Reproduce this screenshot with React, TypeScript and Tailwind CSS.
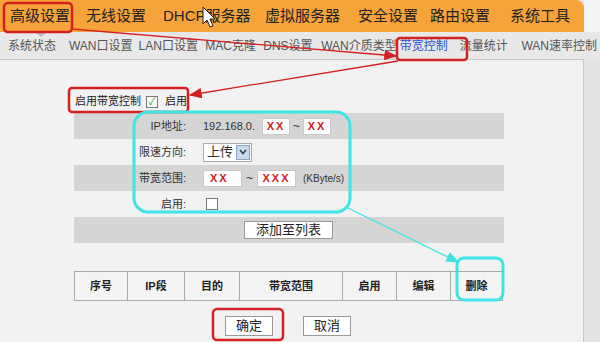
import React from "react";

const topMenu = [
  { label: "高级设置", cls: "w-[76px]" },
  { label: "无线设置", cls: "w-[77px]" },
  { label: "DHCP服务器", cls: "w-[102px]" },
  { label: "虚拟服务器", cls: "w-[93px]" },
  { label: "安全设置", cls: "w-[72px]" },
  { label: "路由设置", cls: "w-[80px]" },
  { label: "系统工具", cls: "w-[70px]" },
];

const subMenu = [
  { label: "系统状态", cls: "w-[62px]" },
  { label: "WAN口设置", cls: "w-[71px]" },
  { label: "LAN口设置", cls: "w-[68px]" },
  { label: "MAC克隆", cls: "w-[59px]" },
  { label: "DNS设置", cls: "w-[59px]" },
  { label: "WAN介质类型", cls: "w-[80px]" },
  { label: "带宽控制", cls: "w-[61px] text-[#2255cc]" },
  { label: "流量统计", cls: "w-[63px]" },
  { label: "WAN速率控制", cls: "w-[80px]" },
];

const columns = [
  { label: "序号", cls: "w-[53px]" },
  { label: "IP段", cls: "w-[57px]" },
  { label: "目的", cls: "w-[55px]" },
  { label: "带宽范围", cls: "w-[103px]" },
  { label: "启用", cls: "w-[54px]" },
  { label: "编辑", cls: "w-[54px]" },
  { label: "删除", cls: "flex-1" },
];

function RedBox({ children, cls }: { children: React.ReactNode; cls: string }) {
  return (
    <span
      className={`inline-flex shrink-0 items-center justify-center h-[17px] bg-white border border-[#c8c8c8] text-[#cc2222] font-bold text-[11px] tracking-[2px] ${cls}`}
    >
      {children}
    </span>
  );
}

function Row({
  label,
  shaded,
  children,
}: {
  label: string;
  shaded?: boolean;
  children: React.ReactNode;
}) {
  return (
    <div className={`flex items-center h-[26px] ${shaded ? "bg-[#d5d5d5]" : ""}`}>
      <div className="w-[112px] shrink-0 text-right text-[11px] text-[#333]">{label}</div>
      <div className="flex items-center pl-[17px] gap-[3px] text-[12px] text-[#333] whitespace-nowrap">
        {children}
      </div>
    </div>
  );
}

function Overlay() {
  return (
    <svg
      className="absolute inset-0 pointer-events-none"
      width="600"
      height="342"
      viewBox="0 0 600 342"
    >
      <defs>
        <marker id="ar" markerWidth="10" markerHeight="8" refX="9" refY="4" orient="auto">
          <path d="M0,0 L10,4 L0,8 z" fill="#d42020" />
        </marker>
        <marker id="ac" markerWidth="10" markerHeight="8" refX="9" refY="4" orient="auto">
          <path d="M0,0 L10,4 L0,8 z" fill="#40e0e0" />
        </marker>
      </defs>
      {/* red highlights */}
      <rect x="4" y="3" width="68" height="29" rx="4" fill="none" stroke="#d42020" strokeWidth="2.5" />
      <rect x="397" y="38" width="70" height="22" rx="3" fill="none" stroke="#d42020" strokeWidth="2.5" />
      <rect x="69" y="88" width="119" height="24" rx="3" fill="none" stroke="#d42020" strokeWidth="2.5" />
      <rect x="213" y="309" width="70" height="31" rx="4" fill="none" stroke="#d42020" strokeWidth="2.5" />
      <line x1="72" y1="29" x2="396" y2="56" stroke="#d42020" strokeWidth="1.3" markerEnd="url(#ar)" />
      <line x1="398" y1="61" x2="190" y2="95" stroke="#d42020" strokeWidth="1.3" markerEnd="url(#ar)" />
      {/* cyan highlights */}
      <rect x="134" y="112" width="216" height="100" rx="14" fill="none" stroke="#40e4e4" strokeWidth="3" />
      <rect x="457" y="258" width="46" height="42" rx="7" fill="none" stroke="#40e4e4" strokeWidth="3" />
      <line x1="348" y1="208" x2="458" y2="262" stroke="#40e4e4" strokeWidth="1.3" markerEnd="url(#ac)" />
      {/* mouse cursor */}
      <path
        d="M203,7 L203,24 L207,20 L210,27 L213,26 L210,19 L215,19 Z"
        fill="#fff"
        stroke="#222"
        strokeWidth="1"
      />
    </svg>
  );
}

export default function App() {
  return (
    <div
      className="relative w-[600px] h-[342px] overflow-hidden bg-[#e6e6e6]"
      style={{ fontFamily: '"Liberation Sans", "Noto Sans CJK SC", sans-serif' }}
    >
      {/* top menu */}
      <div className="flex h-[32px]">
        <div className="w-[584px] bg-[#f6a43a] rounded-tr-[8px] flex items-center pl-[10px] text-[15px] text-[#222]">
          {topMenu.map((m) => (
            <span key={m.label} className={m.cls}>
              {m.label}
            </span>
          ))}
        </div>
        <div className="flex-1 bg-[#f4f4f4]" />
      </div>

      {/* sub menu */}
      <div className="relative flex items-center h-[27px] bg-[#e8e8e8] pl-[8px] text-[12px] text-[#555]">
        <span className="absolute left-[35px] top-0 w-0 h-0 border-l-[6px] border-r-[6px] border-t-[5px] border-l-transparent border-r-transparent border-t-[#bbb]" />
        {subMenu.map((m) => (
          <span key={m.label} className={`whitespace-nowrap ${m.cls}`}>
            {m.label}
          </span>
        ))}
      </div>

      {/* content panel */}
      <div className="flex">
        <div className="w-[584px] h-[283px] bg-[#f2f2f2] border-t border-r border-[#c9c9c9] pl-[74px] pt-[31px]">
          <div className="flex items-center h-[21px] text-[11px] text-[#222] pl-[1px]">
            <span>启用带宽控制</span>
            <span className="w-[12px] h-[12px] bg-white border border-[#777] flex items-center justify-center text-[10px] leading-none text-[#2a9a2a] ml-[5px]">
              ✓
            </span>
            <span className="ml-[7px]">启用</span>
          </div>

          <div className="w-[430px] mt-[1px]">
            <Row label="IP地址:" shaded>
              <span className="text-[11px] mr-[4px]">192.168.0.</span>
              <RedBox cls="w-[28px]">XX</RedBox>
              <span>~</span>
              <RedBox cls="w-[28px]">XX</RedBox>
            </Row>
            <Row label="限速方向:">
              <span className="flex items-center h-[19px] bg-white border border-[#aaa]">
                <span className="px-[3px] text-[13px]">上传</span>
                <span className="w-[14px] h-[15px] mr-[1px] bg-[#c9d9ee] border border-[#8aa4c8] flex items-center justify-center">
                  <svg width="8" height="6" viewBox="0 0 8 6">
                    <path d="M1,1 L4,4.5 L7,1" fill="none" stroke="#345" strokeWidth="1.6" />
                  </svg>
                </span>
              </span>
            </Row>
            <Row label="带宽范围:" shaded>
              <RedBox cls="w-[39px] justify-start pl-[6px]">XX</RedBox>
              <span className="mx-[1px]">~</span>
              <RedBox cls="w-[39px]">XXX</RedBox>
              <span className="ml-[4px] text-[10px]">(KByte/s)</span>
            </Row>
            <Row label="启用:">
              <span className="ml-[3px] w-[12px] h-[12px] bg-white border border-[#777]" />
            </Row>
            <div className="flex items-center h-[26px] bg-[#d5d5d5] pl-[170px]">
              <span className="w-[89px] h-[18px] bg-white border border-[#999] flex items-center justify-center text-[13px] text-[#222]">
                添加至列表
              </span>
            </div>
          </div>

          <div className="w-[429px] mt-[28px] flex h-[30px] border border-[#aaa] bg-[#f4f4f4]">
            {columns.map((c, i) => (
              <div
                key={c.label}
                className={`flex items-center justify-center text-[11px] font-bold text-[#222] ${c.cls} ${
                  i < columns.length - 1 ? "border-r border-[#aaa]" : ""
                }`}
              >
                {c.label}
              </div>
            ))}
          </div>

          <div className="flex gap-[30px] mt-[15px] pl-[151px]">
            <span className="w-[48px] h-[20px] bg-white border border-[#999] flex items-center justify-center text-[13px] text-[#222]">
              确定
            </span>
            <span className="w-[48px] h-[20px] bg-white border border-[#999] flex items-center justify-center text-[13px] text-[#222]">
              取消
            </span>
          </div>
        </div>
        <div className="flex-1 bg-[#e4e4e4]" />
      </div>

      <Overlay />
    </div>
  );
}
